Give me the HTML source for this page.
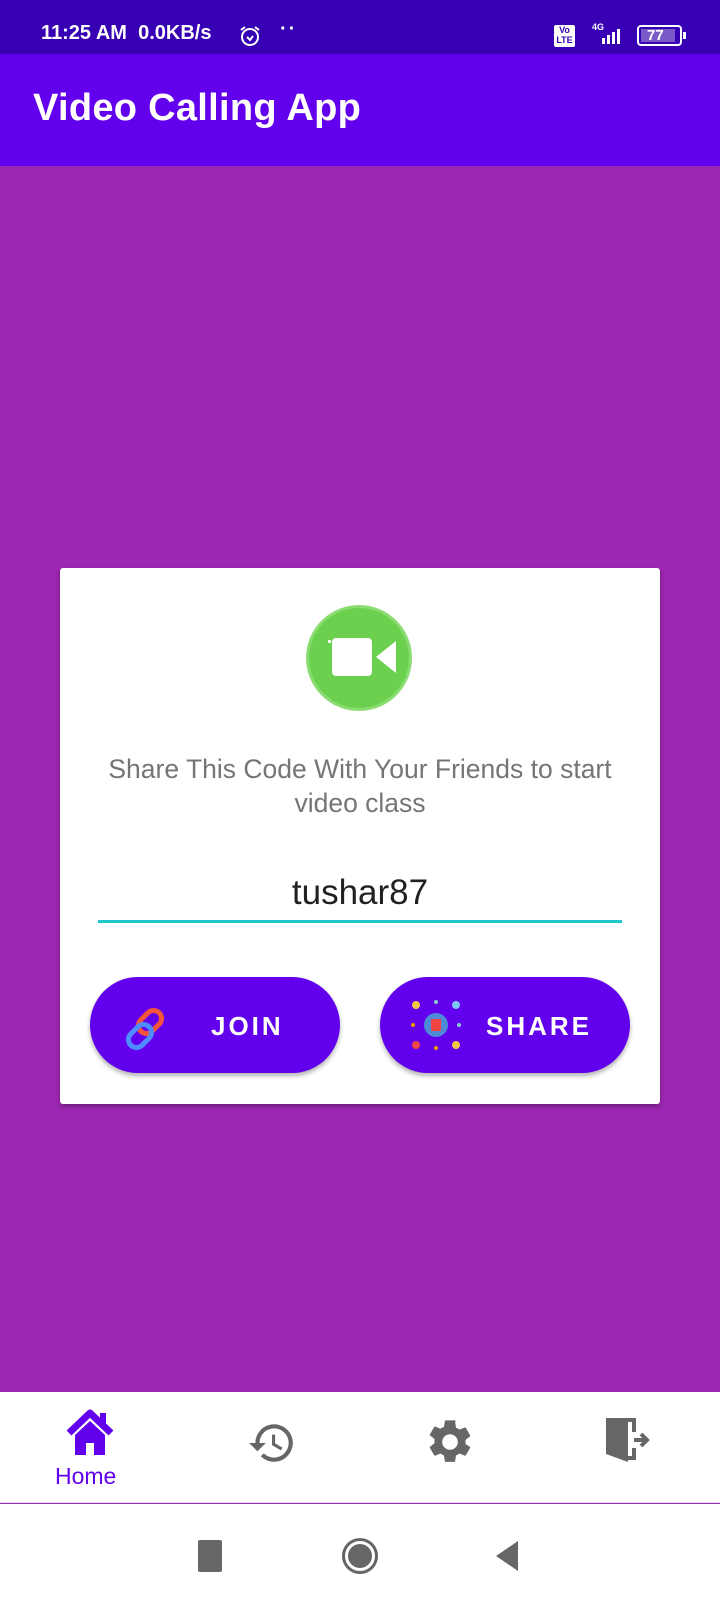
<!DOCTYPE html>
<html><head><style>
*{margin:0;padding:0;box-sizing:border-box}
body{width:720px;height:1600px;background:#9c27b0;font-family:"Liberation Sans",Roboto,sans-serif;position:relative;overflow:hidden}
.sb{position:absolute;top:0;left:0;width:720px;height:54px;background:#3700b3;color:#fff;font-size:20px;font-weight:bold}
.ab{position:absolute;top:54px;left:0;width:720px;height:112px;background:#6200ee;color:#fff;font-size:38px;font-weight:bold;padding:33px 0 0 33px;letter-spacing:0.3px}
.card{position:absolute;left:60px;top:568px;width:600px;height:536px;background:#fff;border-radius:3px;box-shadow:0 2px 4px rgba(0,0,0,.3)}
.btn{position:absolute;top:409px;width:250px;height:96px;border-radius:48px;background:#6200ee;color:#fff;font-size:26px;font-weight:bold;letter-spacing:3px;box-shadow:0 3px 5px rgba(0,0,0,.3)}
.nav{position:absolute;top:1392px;left:0;width:720px;height:111px;background:#fff;border-bottom:1px solid #e0e0e0}
.sys{position:absolute;top:1504px;left:0;width:720px;height:96px;background:#fff}
</style></head><body>
<div class="sb">
<span style="position:absolute;left:41px;top:22px">11:25 AM&nbsp; 0.0KB/s</span>
<svg style="position:absolute;left:238px;top:24px" width="24" height="24" viewBox="0 0 24 24"><circle cx="12" cy="13" r="8" fill="none" stroke="#fff" stroke-width="2"/><path d="M9 13l3 3 3-4M3 6l4-3M21 6l-4-3" stroke="#fff" stroke-width="2" fill="none"/></svg>
<span style="position:absolute;left:280px;top:18px;letter-spacing:2px">··</span>
<div style="position:absolute;left:554px;top:25px;width:21px;height:22px;background:#fff;color:#3700b3;font-size:9px;line-height:10px;text-align:center;border-radius:2px">Vo<br>LTE</div>
<svg style="position:absolute;left:588px;top:22px" width="38" height="24"><text x="4" y="8" fill="#fff" font-size="9" font-family="Liberation Sans">4G</text><rect x="14" y="16" width="3" height="6" fill="#fff"/><rect x="19" y="13" width="3" height="9" fill="#fff"/><rect x="24" y="10" width="3" height="12" fill="#fff"/><rect x="29" y="7" width="3" height="15" fill="#fff"/></svg>
<div style="position:absolute;left:637px;top:25px;width:45px;height:21px;border:2px solid #fff;border-radius:4px;font-size:15px;padding-left:8px;line-height:17px"><div style="position:absolute;left:2px;top:2px;width:34px;height:13px;background:#7a5ac9;z-index:0"></div><span style="position:relative">77</span></div>
<div style="position:absolute;left:683px;top:32px;width:3px;height:7px;background:#fff"></div>
</div>
<div class="ab">Video Calling App</div>
<div class="card">
<div style="position:absolute;left:246px;top:37px;width:106px;height:106px;border-radius:50%;background:#6cd04f;border:3px solid #8bdc73"></div>
<svg style="position:absolute;left:262px;top:60px" width="80" height="60" viewBox="0 0 80 60"><rect x="10" y="10" width="40" height="38" rx="4" fill="#fff"/><path d="M54 29l20-16v32z" fill="#fff"/><rect x="6" y="12" width="3" height="3" fill="#fff"/></svg>
<div style="position:absolute;top:184px;width:100%;text-align:center;color:#757575;font-size:26.5px;line-height:34px">Share This Code With Your Friends to start<br>video class</div>
<div style="position:absolute;top:305px;width:100%;text-align:center;color:#212121;font-size:35px">tushar87</div>
<div style="position:absolute;left:38px;top:352px;width:524px;height:3px;background:#1ec8c8"></div>
<div class="btn" style="left:30px"><svg style="position:absolute;left:30px;top:28px" width="52" height="48" viewBox="0 0 52 48"><rect x="22" y="4" width="16" height="26" rx="8" transform="rotate(45 30 17)" fill="none" stroke="#f4553a" stroke-width="5"/><rect x="12" y="18" width="16" height="26" rx="8" transform="rotate(45 20 31)" fill="none" stroke="#4f8cff" stroke-width="5"/></svg><span style="position:absolute;left:121px;top:34px">JOIN</span></div>
<div class="btn" style="left:320px"><svg style="position:absolute;left:30px;top:22px" width="52" height="52" viewBox="0 0 52 52"><circle cx="26" cy="26" r="12" fill="#4f8ad8"/><rect x="21" y="20" width="10" height="12" fill="#e44"/><circle cx="6" cy="6" r="4" fill="#f5c842"/><circle cx="46" cy="6" r="4" fill="#7cc8f5"/><circle cx="6" cy="46" r="4" fill="#e44"/><circle cx="46" cy="46" r="4" fill="#f5c842"/><circle cx="26" cy="3" r="2" fill="#8cc"/><circle cx="26" cy="49" r="2" fill="#e90"/><circle cx="3" cy="26" r="2" fill="#e90"/><circle cx="49" cy="26" r="2" fill="#8cc"/></svg><span style="position:absolute;left:106px;top:34px">SHARE</span></div>
</div>
<div class="nav">
<svg style="position:absolute;left:65px;top:17px" width="50" height="48" viewBox="0 0 50 48"><path d="M4 24L25 4l21 20" stroke="#6200ee" stroke-width="7" fill="none" stroke-linejoin="round"/><path d="M10 26v20h11V34h8v12h11V26L25 12z" fill="#6200ee"/><rect x="35" y="4" width="6" height="12" fill="#6200ee"/></svg>
<div style="position:absolute;left:55px;top:71px;color:#6200ee;font-size:23px">Home</div>
<svg style="position:absolute;left:247px;top:26px" width="50" height="50" viewBox="0 0 24 24"><path d="M13 3a9 9 0 0 0-9 9H1l4 4 4-4H6a7 7 0 1 1 2.05 4.95l-1.42 1.42A9 9 0 1 0 13 3zm-1 5v5l4.25 2.52.77-1.28-3.52-2.09V8z" fill="#666"/></svg>
<svg style="position:absolute;left:424px;top:24px" width="52" height="52" viewBox="0 0 24 24"><path d="M19.14 12.94c.04-.3.06-.61.06-.94s-.02-.64-.07-.94l2.03-1.58a.49.49 0 0 0 .12-.61l-1.920-3.32a.49.49 0 0 0-.59-.22l-2.39.96c-.5-.38-1.03-.7-1.62-.94l-.36-2.54A.48.48 0 0 0 13.92 2h-3.84c-.24 0-.43.17-.47.41l-.36 2.54c-.59.24-1.13.57-1.62.94l-2.39-.96a.49.49 0 0 0-.59.22L2.74 8.47c-.12.21-.08.47.12.61l2.03 1.58c-.05.3-.09.63-.09.94s.02.64.07.94l-2.03 1.58a.49.49 0 0 0-.12.61l1.92 3.32c.12.22.37.29.59.22l2.39-.96c.5.38 1.03.7 1.62.94l.36 2.54c.05.24.24.41.48.41h3.84c.24 0 .44-.17.47-.41l.36-2.54c.59-.24 1.130-.56 1.62-.94l2.39.96c.22.08.47 0 .59-.22l1.92-3.32a.49.49 0 0 0-.12-.61zM12 15.6A3.6 3.6 0 1 1 12 8.4a3.6 3.6 0 0 1 0 7.2z" fill="#666"/></svg>
<svg style="position:absolute;left:604px;top:24px" width="52" height="50" viewBox="0 0 52 50"><path d="M2 2h22v44l-22-8z" fill="#666"/><path d="M24 2h8v14h-4V6h-4zM28 32h4v12h-8v-4h4z" fill="#666"/><path d="M30 24h12M37 18l6 6-6 6" stroke="#666" stroke-width="4" fill="none"/></svg>
</div>
<div class="sys">
<div style="position:absolute;left:198px;top:36px;width:24px;height:32px;background:#666;border-radius:2px"></div>
<div style="position:absolute;left:342px;top:34px;width:36px;height:36px;border-radius:50%;border:3px solid #666"><div style="margin:3px;width:24px;height:24px;border-radius:50%;background:#666"></div></div>
<svg style="position:absolute;left:494px;top:37px" width="24" height="30"><path d="M24 0v30L2 15z" fill="#666"/></svg>
</div>
</body></html>
